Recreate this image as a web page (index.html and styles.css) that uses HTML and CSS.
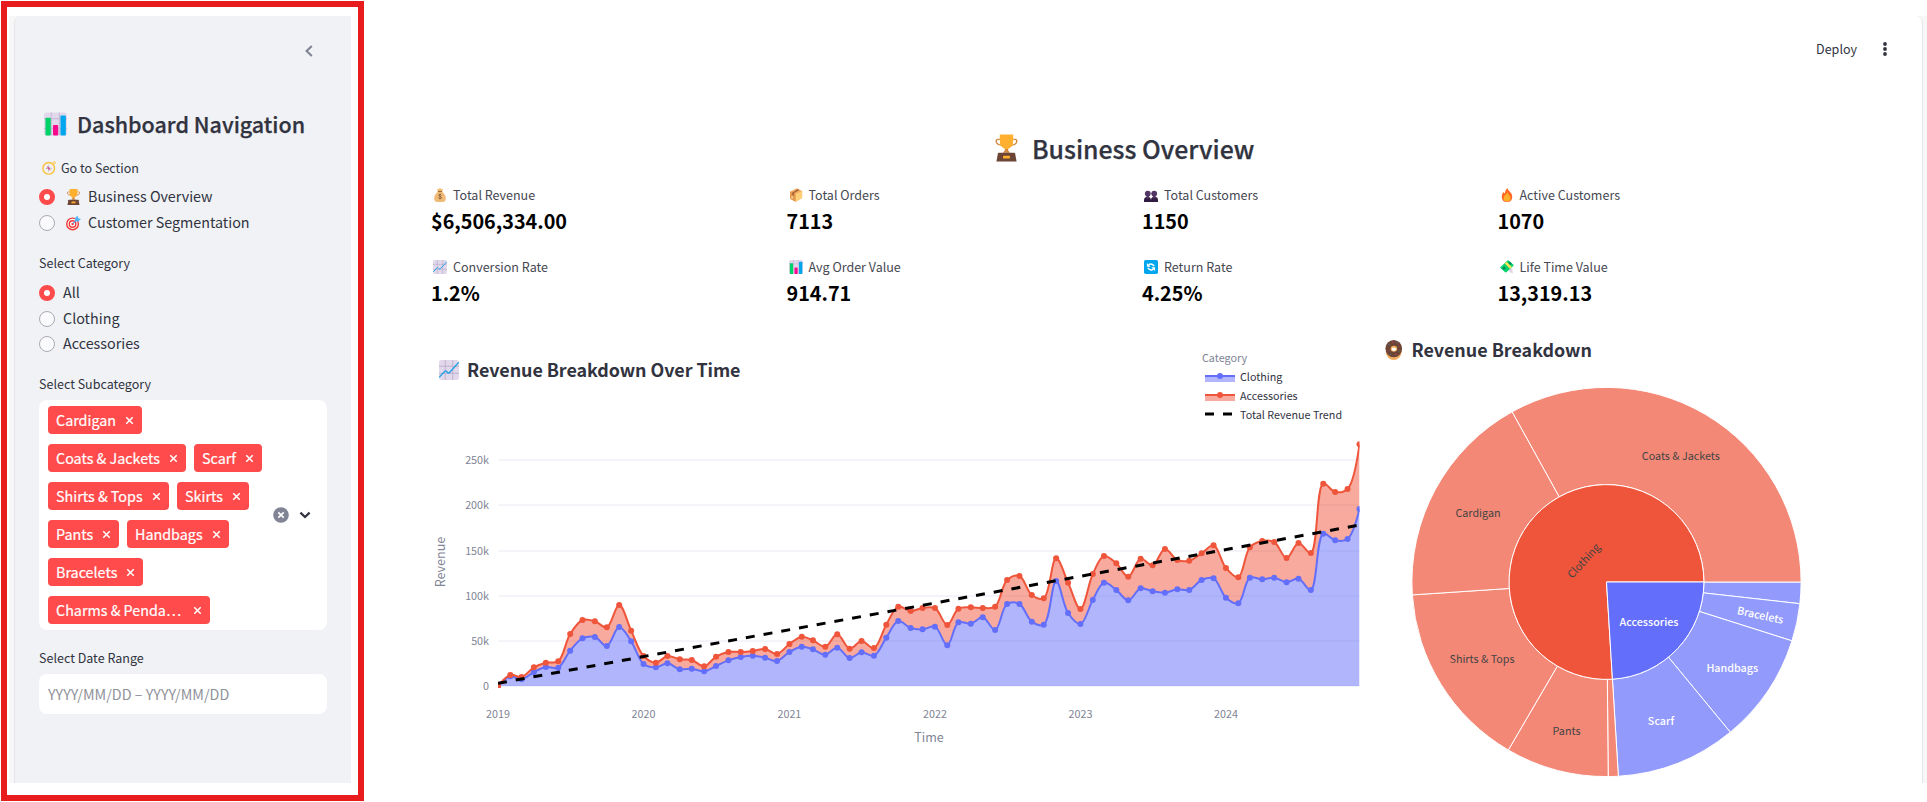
FILE: index.html
```html
<!DOCTYPE html>
<html lang="en">
<head>
<meta charset="utf-8">
<title>Business Overview</title>
<link rel="stylesheet" href="styles.css">
</head>
<body>
<svg class="sprite" aria-hidden="true">
  <symbol id="bars" viewBox="0 0 24 24">
    <rect width="24" height="24" rx="3" fill="#e1d8ec"/>
    <path d="M0 6.5h24M0 17h24M7.5 0v24M16 0v24" stroke="#c3b7d3" stroke-width="1" fill="none"/>
    <rect x="1.5" y="5.5" width="5.6" height="18.5" rx="1" fill="#00d26a"/>
    <rect x="9.4" y="13" width="5.4" height="11" rx="1" fill="#f70a8d"/>
    <rect x="17.2" y="3" width="5.6" height="21" rx="1" fill="#00a6ed"/>
  </symbol>
  <symbol id="line" viewBox="0 0 24 24">
    <rect width="24" height="24" rx="3" fill="#e1d8ec"/>
    <path d="M0 7.5h24M0 16h24M7.5 0v24M16.5 0v24" stroke="#b9abc9" stroke-width="1" fill="none"/>
    <path d="M.8 20 7 13.4q1-.8 2 .2l1.4 1.6q1 .8 2 0L23.2 3.400" stroke="#26a4e6" stroke-width="1.7" stroke-linecap="round" stroke-linejoin="round" fill="none"/>
  </symbol>
  <symbol id="compass" viewBox="0 0 24 24">
    <circle cx="21" cy="3" r="2" fill="none" stroke="#f9c23c" stroke-width="1.500"/>
    <circle cx="11.500" cy="12.500" r="10" fill="#f4f0f2" stroke="#f9c23c" stroke-width="2.400"/>
    <path d="M11.500 5.500l1.200 5.800 5.800 1.200-5.800 1.200-1.200 5.800-1.200-5.800-5.800-1.200 5.800-1.200z" fill="#b3afbd"/>
    <path d="M8 8.500 12.500 11.500l2.500 5-4.500-3z" fill="#d9558a"/>
  </symbol>
  <symbol id="trophy" viewBox="0 0 24 28">
    <path d="M5 5H3.200Q1 5 1.300 7.200 1.800 10.500 6.500 11M19 5h1.800q2.200 0 1.900 2.200-.5 3.300-5.200 3.800" fill="none" stroke="#d3883e" stroke-width="1.500"/>
    <path d="M10.300 14h3.400v2.400l2 2.600H8.300l2-2.600z" fill="#d3883e"/>
    <path d="M5 0h14v7q0 5.500-4.500 7.500-2.500 1.200-5 0Q5 12.500 5 7z" fill="#ffb02e"/>
    <path d="M4 19h16q.8 0 1 .8L22.500 28h-21L3 19.800q.2-.8 1-.8z" fill="#6d4534"/>
    <rect x="8.400" y="22" width="7.200" height="3" rx=".6" fill="#ffb02e"/>
  </symbol>
  <symbol id="target" viewBox="0 0 24 24">
    <circle cx="10.500" cy="13.500" r="9.300" fill="#fff" stroke="#f03a3a" stroke-width="2.300"/>
    <circle cx="10.500" cy="13.500" r="5.200" fill="#fff" stroke="#f03a3a" stroke-width="2.300"/>
    <circle cx="10.500" cy="13.500" r="1.900" fill="#f03a3a"/>
    <path d="M11 13 17 7" stroke="#46a4f0" stroke-width="1.800"/>
    <path d="M14.500 9V4.500L18.500 0l1.200 4.200L24 5.500l-4.500 4z" fill="#50b5fa"/>
  </symbol>
  <symbol id="bag" viewBox="0 0 24 24">
    <path d="M7.500 1.500l2.300.8L12 0l2.200 2.300 2.300-.8.500 1.500L15 6H9L7 3z" fill="#f1b765"/>
    <path d="M9 6h6q7 5 7 12 0 6-6 6H8q-6 0-6-6Q2 11 9 6z" fill="#efbb76"/>
    <rect x="8" y="5" width="8" height="2" rx="1" fill="#a56a35"/>
    <path d="M14.600 12.400q-.8-1.400-2.600-1.400t-2.100 1.700q0 1.500 2.200 1.800t2.400 1.900-2.500 1.800q-2 0-2.700-1.600M12 9.500v10" fill="none" stroke="#7a5337" stroke-width="1.200"/>
  </symbol>
  <symbol id="box" viewBox="0 0 24 24">
    <path d="M2 6 13.500.5 22.500 5v12L11 23.500 2 18.500z" fill="#f3ad61"/>
    <path d="M2 6l9.500 4.500V23.500L2 18.500z" fill="#e19747"/>
    <path d="M11.500 10.500 22.500 5v12l-11 6.500z" fill="#ffcf7a"/>
    <path d="M5.500 8 15 2.200l2.800 1.300L8 9v4l-2.500-1.200z" fill="#9b5b37"/>
    <rect x="4" y="14.500" width="3" height="3.500" fill="#f3d3b2"/>
  </symbol>
  <symbol id="people" viewBox="0 0 24 24">
    <path d="M0 24v-3q0-5 4.500-5.500h4Q12 16 12 21v3zM12 24v-3q0-5 4-5.500h4Q24 16 24 21v3z" fill="#321b41"/>
    <circle cx="6.500" cy="9.500" r="5" fill="#533566"/><circle cx="17.500" cy="9.500" r="5" fill="#533566"/>
    <path d="M4.200 13h4.600v5H4.200zM15.200 13h4.600v5h-4.600z" fill="#533566"/>
  </symbol>
  <symbol id="fire" viewBox="0 0 24 24">
    <path d="M12.500 0q1 3.500 4.500 6.500Q21 10 21 15q0 9-9 9t-9-9q0-5 3-8l2 2.500Q9 3 12.500 0z" fill="#ff6723"/>
    <path d="M12.500 7q1 3 3.500 5.500 2 2.200 2 5Q18 23 12 23t-6-5.500q0-3.500 3.500-6 2.500-2 3-4.500z" fill="#ffb02e"/>
  </symbol>
  <symbol id="cycle" viewBox="0 0 24 24">
    <rect width="24" height="24" rx="3" fill="#00a6ed"/>
    <path d="M8 8.200q5-3.500 9.500 2.300M16 15.800q-5 3.500-9.500-2.300" fill="none" stroke="#fff" stroke-width="2.600"/>
    <path d="M5 5v6.500h6.500zM19 19v-6.500h-6.500z" fill="#fff"/>
  </symbol>
  <symbol id="cash" viewBox="0 0 24 24">
    <path d="M14 12l7 3 1 8-5-2-5-8z" fill="#dcd5e4"/>
    <path d="M1 12 13 1q1-1 2 0l8 7q1 1 0 2L11 21q-1 1-2 0L1 14q-1-1 0-2z" fill="#00d26a"/>
    <circle cx="7" cy="14" r="2.400" fill="#008463"/><circle cx="17" cy="6" r="2.400" fill="#008463"/>
    <path d="M8 6l3.500-3 9 9-3.500 3z" fill="#f9e45c"/>
  </symbol>
  <symbol id="donut" viewBox="0 0 24 28">
    <ellipse cx="12" cy="16" rx="11" ry="12" fill="#f3ad61"/>
    <ellipse cx="12" cy="12" rx="11.700" ry="12" fill="#6d4534"/>
    <ellipse cx="12.200" cy="12.200" rx="4.600" ry="4.200" fill="#f3ad61"/>
    <ellipse cx="12.200" cy="13" rx="3" ry="2.500" fill="#fff"/>
    <path d="M5 6l1 1M16 3l1 1M20 15l-1 1M7 20l1 0" stroke="#3f9be8" stroke-width="1.300"/>
    <path d="M10 3l1.500.7M3.500 14l1 1M14 20l1.500 0M19 8l1 1" stroke="#f0388e" stroke-width="1.300"/>
  </symbol>
  <symbol id="cross" viewBox="0 0 10 10"><path d="M1.400 1.400l7.200 7.200M8.600 1.400 1.400 8.600" stroke="currentColor" stroke-width="1.700" fill="none"/></symbol>
</svg>

<div class="page">
  <div class="highlight">
    <aside class="sidebar">
     <div class="panel">
      <div class="collapse"><svg class="chev-left" viewBox="0 0 8 12"><path d="M6.800.9 1.600 6l5.200 5.100" fill="none" stroke="#808495" stroke-width="2.100"/></svg></div>
      <h2 class="nav-title"><svg class="nav-icon"><use href="#bars"/></svg><span>Dashboard Navigation</span></h2>

      <div class="label first"><svg class="label-icon"><use href="#compass"/></svg><span>Go to Section</span></div>
      <div class="radios sections">
        <label class="radio"><i class="dot on"></i><svg class="opt-icon"><use href="#trophy"/></svg><span>Business Overview</span></label>
        <label class="radio"><i class="dot"></i><svg class="opt-icon"><use href="#target"/></svg><span>Customer Segmentation</span></label>
      </div>

      <div class="label category">Select Category</div>
      <div class="radios">
        <label class="radio"><i class="dot on"></i><span>All</span></label>
        <label class="radio"><i class="dot"></i><span>Clothing</span></label>
        <label class="radio"><i class="dot"></i><span>Accessories</span></label>
      </div>

      <div class="label">Select Subcategory</div>
      <div class="multi">
        <div class="tags">
          <div class="tag-row"><span class="tag t94">Cardigan<svg><use href="#cross"/></svg></span></div>
          <div class="tag-row"><span class="tag t138">Coats &amp; Jackets<svg><use href="#cross"/></svg></span><span class="tag t68">Scarf<svg><use href="#cross"/></svg></span></div>
          <div class="tag-row"><span class="tag t121">Shirts &amp; Tops<svg><use href="#cross"/></svg></span><span class="tag t72">Skirts<svg><use href="#cross"/></svg></span></div>
          <div class="tag-row"><span class="tag t71">Pants<svg><use href="#cross"/></svg></span><span class="tag t102">Handbags<svg><use href="#cross"/></svg></span></div>
          <div class="tag-row"><span class="tag t95">Bracelets<svg><use href="#cross"/></svg></span></div>
          <div class="tag-row"><span class="tag t162">Charms &amp; Penda…<svg><use href="#cross"/></svg></span></div>
        </div>
        <svg class="clear" viewBox="0 0 16 16"><circle cx="8" cy="8" r="7.800" fill="#808495"/><path d="M5.300 5.300l5.400 5.400M10.700 5.300l-5.400 5.400" stroke="#fff" stroke-width="1.700"/></svg>
        <svg class="chev-down" viewBox="0 0 12 8"><path d="M1.400 1.600 6 6l4.600-4.400" fill="none" stroke="#31333f" stroke-width="2.200"/></svg>
      </div>

      <div class="label date">Select Date Range</div>
      <div class="date-box">YYYY/MM/DD – YYYY/MM/DD</div>
     </div>
    </aside>
  </div>

  <div class="stage">
  <main class="main">
    <header class="toolbar"><span>Deploy</span><svg class="kebab" viewBox="0 0 4 14"><circle cx="2" cy="2" r="1.900"/><circle cx="2" cy="7" r="1.900"/><circle cx="2" cy="12" r="1.900"/></svg></header>
    <h1 class="title"><svg class="title-icon"><use href="#trophy"/></svg><span>Business Overview</span></h1>
    <section class="metrics">
      <div class="metric"><div class="m-label"><svg><use href="#bag"/></svg><span>Total Revenue</span></div><div class="m-value">$6,506,334.00</div></div>
      <div class="metric"><div class="m-label"><svg><use href="#box"/></svg><span>Total Orders</span></div><div class="m-value">7113</div></div>
      <div class="metric"><div class="m-label"><svg><use href="#people"/></svg><span>Total Customers</span></div><div class="m-value">1150</div></div>
      <div class="metric"><div class="m-label"><svg><use href="#fire"/></svg><span>Active Customers</span></div><div class="m-value">1070</div></div>
      <div class="metric"><div class="m-label"><svg><use href="#line"/></svg><span>Conversion Rate</span></div><div class="m-value">1.2%</div></div>
      <div class="metric"><div class="m-label"><svg><use href="#bars"/></svg><span>Avg Order Value</span></div><div class="m-value">914.71</div></div>
      <div class="metric"><div class="m-label"><svg><use href="#cycle"/></svg><span>Return Rate</span></div><div class="m-value">4.25%</div></div>
      <div class="metric"><div class="m-label"><svg><use href="#cash"/></svg><span>Life Time Value</span></div><div class="m-value">13,319.13</div></div>
    </section>
    <section class="charts">
      <svg class="area" id="area" viewBox="422 320 952 463"></svg>
      <svg class="sun" id="sun" viewBox="1374 320 466 463"></svg>
    </section>
  </main>
  </div>
</div>
<script src="app.js"></script>
</body>
</html>
```

FILE: styles.css
```css
* { box-sizing: border-box; }
body {
  margin: 0;
  background: #fff;
  color: #31333f;
  font-family: "Noto Sans CJK SC", "Open Sans", sans-serif;
  font-size: 14.33px;
  line-height: 24px;
}
svg { display: block; flex: none; }
.sprite { position: absolute; width: 0; height: 0; }
h1, h2 { margin: 0; }
.page { display: flex; width: 1927px; height: 802px; overflow: hidden; }

.highlight {
  flex: none;
  width: 363px;
  height: 800px;
  margin: 1px 0 0 1px;
  border: 6px solid #e81c1c;
  padding: 9px 7px 12px 2px;
}
.sidebar { height: 767px; padding-left: 5px; background: #f7f7f8; }
.panel {
  height: 767px;
  padding: 0 24px;
  background: #f0f2f6;
  border-left: 1px solid #e4e5e8;
  border-top-left-radius: 7px;
}
.collapse { height: 93px; padding: 29px 14px 0 0; display: flex; justify-content: flex-end; }
.chev-left { width: 8px; height: 12px; }
.nav-title {
  display: flex;
  align-items: center;
  gap: 10px;
  height: 29px;
  padding-left: 5px;
  font-size: 21.5px;
  font-weight: 500;
  line-height: 29px;
  white-space: nowrap;
  -webkit-text-stroke: .25px #31333f;
}
.nav-title svg, .title svg { -webkit-text-stroke: 0; }
.nav-icon { width: 23px; height: 24px; }
.label {
  display: flex;
  align-items: center;
  height: 20px;
  margin: 17.800px 0 6px;
  font-size: 12.530px;
  line-height: 20px;
}
.label.first { margin: 20px 0 7px; gap: 5px; padding-left: 3px; }
.label.category { margin: 18.400px 0 8px; }
.label.date { margin-top: 18px; }
.label-icon { width: 14px; height: 14px; }
.radios { display: flex; flex-direction: column; gap: 1.600px; }
.radio { display: flex; align-items: center; gap: 8px; height: 24px; }
.radio span { margin-bottom: 1.600px; }
.dot { width: 16px; height: 16px; border-radius: 50%; border: 1px solid #a9abb5; background: #fafafc; }
.dot.on { border: 5px solid #ff4b4b; background: #fff; }
.opt-icon { width: 15px; height: 16px; margin: 0 0 0 3px; }
.sections .radio span { margin-left: -1px; letter-spacing: -.02px; }
.multi {
  display: flex;
  align-items: center;
  height: 230px;
  padding: 0 16px 0 9px;
  border-radius: 8px;
  background: #fff;
}
.tags { display: flex; flex-direction: column; gap: 10px; width: 226px; }
.tag-row { display: flex; gap: 8px; }
.tag {
  display: flex;
  align-items: center;
  justify-content: space-between;
  height: 28px;
  padding: 0 8px;
  border-radius: 4px;
  background: #ff4b4b;
  color: #fff;
  line-height: 27px;
  padding-bottom: 1px;
  white-space: nowrap;
  -webkit-text-stroke: .2px #fff;
}
.tag svg { width: 9px; height: 9px; margin-top: 2px; -webkit-text-stroke: 0; }
.t94 { width: 94px; } .t138 { width: 138px; } .t68 { width: 68px; } .t121 { width: 121px; }
.t72 { width: 72px; } .t71 { width: 71px; } .t102 { width: 102px; } .t95 { width: 95px; } .t162 { width: 162px; }
.clear { width: 16px; height: 16px; margin-left: .700px; }
.chev-down { width: 12px; height: 8px; margin-left: 10px; }
.date-box {
  height: 40px;
  padding: 0 9px;
  border-radius: 8px;
  background: #fff;
  color: #8f9199;
  line-height: 40px;
}

.stage { flex: 1; height: 767px; margin-top: 16px; padding-right: 4px; background: linear-gradient(90deg, #fff 50%, #f7f7f8 50%); }
.main {
  height: 767px;
  padding-left: 67px;
  border-right: 1px solid #e4e5e8;
  border-top-right-radius: 7px;
  background: #fff;
}
.toolbar {
  display: flex;
  align-items: center;
  justify-content: flex-end;
  gap: 26px;
  height: 66px;
  padding-right: 35px;
  font-size: 12.530px;
}
.kebab { width: 4px; height: 14px; fill: #31333f; }
.title {
  display: flex;
  align-items: center;
  gap: 14px;
  height: 34px;
  margin: 49px 0 19.500px 564px;
  font-size: 24.850px;
  font-weight: 500;
  line-height: 34px;
  -webkit-text-stroke: .25px #31333f;
}
.title-icon { width: 23px; height: 28px; }
.metrics { display: grid; grid-template-columns: repeat(4, 355.500px); grid-auto-rows: 72px; }
.m-label { display: flex; align-items: center; gap: 6px; height: 20px; padding-left: 2px; font-size: 12.530px; line-height: 20px; color: #464852; }
.m-label svg { width: 14px; height: 14px; }
.m-value { height: 28px; margin-top: 2.500px; color: #000; font-size: 19.800px; font-weight: 700; line-height: 28px; }
.charts { display: flex; margin: -8.500px 0 0 -9px; }
.area { width: 952px; height: 463px; }
.sun { width: 466px; height: 463px; }
.charts text { font-size: 10.750px; }
.charts .head { font-size: 17.900px; font-weight: 700; fill: #31333f; }
.axis { fill: #808495; }
.charts .axis-title { font-size: 12.530px; fill: #808495; }
.legend { fill: #31333f; }
.grid { stroke: #e6eaf1; stroke-width: 1; }
.on-red { fill: #444; text-anchor: middle; }
.on-blue { fill: #fff; text-anchor: middle; font-weight: 500; }
```

FILE: app.js
```js
const N = (v) => v.toFixed(2);

// Pixel heights of the stacked series, one value per month from January 2019.
const accessories = [
  1098,1065,1071,1042,1028,1024,942,900,904,922,855,932,
  1008,1028,1008,1018,1020,1039,1010,996,996,993,987,1002,
  972,950,961,980,943,986,963,984,914,860,873,864,
  864,915,866,862,864,860,780,768,825,835,715,788,
  867,762,708,730,770,716,736,687,720,722,700,676,
  744,772,682,663,666,714,669,699,491,516,507,373];
const clothing = [
  1098,1069,1078,1056,1041,1043,992,955,951,978,921,964,
  1032,1042,1030,1048,1046,1054,1038,1021,1011,1007,1013,1023,
  996,980,988,1004,983,1014,997,1007,953,903,924,928,
  920,976,907,911,892,930,852,852,905,914,783,879,
  912,840,788,810,841,805,814,818,808,810,780,775,
  833,850,773,778,773,787,776,810,641,661,657,567];

const start = Date.UTC(2019, 0, 1), end = Date.UTC(2024, 11, 1);
const xAt = (y, m) => 498 + 861.5 * (Date.UTC(y, m, 1) - start) / (end - start);
const points = (rows) => rows.map((v, i) => [xAt(2019 + Math.floor(i / 12), i % 12), 320 + v / 3]);

// Centripetal Catmull-Rom tangents.
function tangent(p, c, n) {
  const a = [p[0] - c[0], p[1] - c[1]], b = [n[0] - c[0], n[1] - c[1]];
  const da = Math.pow(a[0] * a[0] + a[1] * a[1], 0.25), db = Math.pow(b[0] * b[0] + b[1] * b[1], 0.25);
  const v = [db * db * a[0] - da * da * b[0], db * db * a[1] - da * da * b[1]];
  const k1 = 3 * db * (da + db), k2 = 3 * da * (da + db);
  return [[c[0] + v[0] / k1, c[1] + v[1] / k1], [c[0] - v[0] / k2, c[1] - v[1] / k2]];
}
const s = (p) => N(p[0]) + ' ' + N(p[1]);
function spline(p) {
  const t = [];
  for (let i = 1; i < p.length - 1; i++) t.push(tangent(p[i - 1], p[i], p[i + 1]));
  let d = 'Q' + s(t[0][0]) + ' ' + s(p[1]);
  for (let i = 2; i < p.length - 1; i++) d += 'C' + s(t[i - 2][1]) + ' ' + s(t[i - 1][0]) + ' ' + s(p[i]);
  return d + 'Q' + s(t[t.length - 1][1]) + ' ' + s(p[p.length - 1]);
}

const acc = points(accessories), clo = points(clothing);
const accPath = 'M' + s(acc[0]) + spline(acc), cloPath = 'M' + s(clo[0]) + spline(clo);
const back = clo.slice().reverse();
const dots = (p, c) => p.map((q) => `<circle cx="${N(q[0])}" cy="${N(q[1])}" r="3" fill="${c}"/>`).join('');
const RED = '#ef553b', BLUE = '#636efa';

let a = '<svg x="439" y="360" width="20" height="20"><use href="#line" width="20" height="20"/></svg><text class="head" x="467" y="376.500" textLength="273.500">Revenue Breakdown Over Time</text>';
a += '<text class="axis" x="1202" y="362">Category</text>';
[['Clothing', BLUE, 376], ['Accessories', RED, 395]].forEach(([name, c, y]) => {
  a += `<rect x="1205" y="${y}" width="30" height="6" fill="${c}" opacity=".5"/><path d="M1205 ${y}h30" stroke="${c}" stroke-width="2"/><circle cx="1220" cy="${y}" r="3" fill="${c}"/><text class="legend" x="1240" y="${y + 5}">${name}</text>`;
});
a += '<path d="M1205 414h30" stroke="#000" stroke-width="3" stroke-dasharray="9 9"/><text class="legend" x="1240" y="419">Total Revenue Trend</text>';
[0, 50, 100, 150, 200, 250].forEach((v) => {
  const y = Math.round(686 - v * 0.9026) - 0.5;
  a += `<path class="grid" d="M498 ${y + 0.5}H1359.500"/><text class="axis" x="489" y="${y + 4.500}" text-anchor="end">${v ? v + 'k' : 0}</text>`;
});
[2019, 2020, 2021, 2022, 2023, 2024].forEach((y) => {
  a += `<text class="axis" x="${N(xAt(y, 0))}" y="718" text-anchor="middle">${y}</text>`;
});
a += '<text class="axis-title" x="929" y="742" text-anchor="middle">Time</text><text class="axis-title" transform="translate(445 562) rotate(-90)" text-anchor="middle">Revenue</text>';
a += '<clipPath id="plot"><rect x="498" y="441" width="861.500" height="247"/></clipPath><g clip-path="url(#plot)" fill="none">';
a += `<path d="${cloPath}L1359.500 686L498 686Z" fill="${BLUE}" opacity=".5"/><path d="${accPath}L${s(back[0])}${spline(back)}Z" fill="${RED}" opacity=".5"/>`;
a += `<path d="${cloPath}" stroke="${BLUE}" stroke-width="2"/>${dots(clo, BLUE)}<path d="${accPath}" stroke="${RED}" stroke-width="2"/>${dots(acc, RED)}`;
a += '<path d="M498 683.300 1359.500 525" stroke="#000" stroke-width="3" stroke-dasharray="9 9"/></g>';
document.getElementById('area').innerHTML = a;

const cx = 1606.5, cy = 582, R = 194.6, r = 97.4;
const at = (rad, deg) => N(cx + rad * Math.cos(deg * Math.PI / 180)) + ' ' + N(cy + rad * Math.sin(deg * Math.PI / 180));
const ring = (a0, a1, r0, r1, fill) => {
  const big = a1 - a0 > 180 ? 1 : 0;
  return `<path d="M${at(r0, a0)}L${at(r1, a0)}A${r1} ${r1} 0 ${big} 1 ${at(r1, a1)}L${at(r0, a1)}${r0 ? `A${r0} ${r0} 0 ${big} 0 ${at(r0, a0)}` : ''}Z" fill="${fill}" stroke="#fff"/>`;
};
let h = '<svg x="1385" y="340" width="17.500" height="20"><use href="#donut" width="17.500" height="20"/></svg><text class="head" x="1411.500" y="357">Revenue Breakdown</text>';
[0, 6.4, 17.6, 50.5, 86.5].reduce((p, q) => { h += ring(p, q, r, R, '#929afc'); return q; });
[86.5, 89.5, 120.3, 176.2, 241, 360].reduce((p, q) => { h += ring(p, q, r, R, '#f48876'); return q; });
h += ring(86.5, 360, 0, r, RED) + ring(0, 86.5, 0, r, BLUE);
[['Coats &amp; Jackets', 1680.8, 460], ['Cardigan', 1478, 517], ['Shirts &amp; Tops', 1482, 663], ['Pants', 1566.5, 735]].forEach(([t, x, y]) => { h += `<text class="on-red" x="${x}" y="${y}">${t}</text>`; });
[['Scarf', 1661, 725], ['Handbags', 1732.3, 672], ['Accessories', 1649, 626]].forEach(([t, x, y]) => { h += `<text class="on-blue" x="${x}" y="${y}">${t}</text>`; });
h += '<text class="on-blue" transform="translate(1759.500 619) rotate(12)">Bracelets</text><text class="on-red" transform="translate(1586.500 563.500) rotate(-47.500)">Clothing</text>';
document.getElementById('sun').innerHTML = h;
```
